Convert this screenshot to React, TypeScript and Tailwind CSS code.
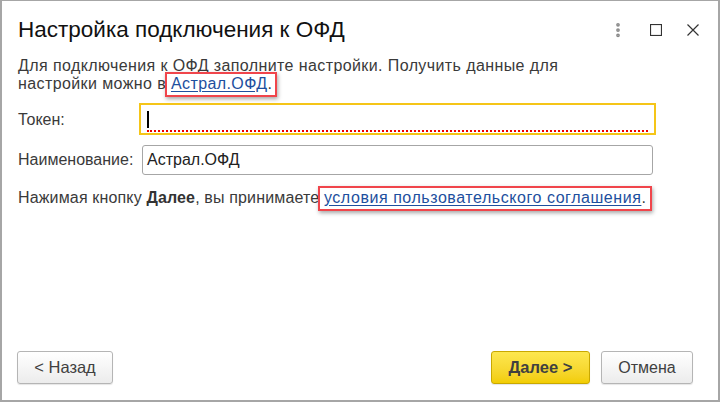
import { EllipsisVertical } from "lucide-react";

export default function App() {
  return (
    <div
      className="w-[720px] h-[402px] bg-white border-l-2 border-r-2 border-b-2 border-t border-[#a6a6a6] flex flex-col text-[#3a3a3a]"
      style={{ fontFamily: '"Liberation Sans", Arial, sans-serif' }}
    >
      {/* Header */}
      <div className="flex items-center pl-[16px] pr-[19px] pt-[13px] h-[44px]">
        <h1 className="flex-1 text-[22.5px] leading-[28px] text-[#111]">Настройка подключения к ОФД</h1>
        <div className="flex items-center">
          <EllipsisVertical className="h-[18px] w-[18px] text-[#8a8a8a]" strokeWidth={3} />
          <svg className="ml-[23px] h-[12px] w-[12px]" viewBox="0 0 12 12">
            <rect x="0.5" y="0.5" width="11" height="11" fill="none" stroke="#333" strokeWidth="1.2" />
          </svg>
          <svg className="ml-[25px] h-[12px] w-[12px]" viewBox="0 0 12 12">
            <path d="M0.5 0.5 L11.5 11.5 M11.5 0.5 L0.5 11.5" stroke="#333" strokeWidth="1.2" />
          </svg>
        </div>
      </div>

      {/* Body */}
      <div className="flex-1 flex flex-col pl-[16px] pr-[62px] pt-[12px] text-[16px] leading-[18px]">
        <p className="pr-[60px] tracking-[0.4px]">
          Для подключения к ОФД заполните настройки. Получить данные для настройки можно в{" "}
          <span className="relative">
            <a className="text-[#1d4f9e] underline underline-offset-2">Астрал.ОФД</a>.
            <span className="absolute -left-[6px] -right-[5px] -top-[3px] -bottom-[5px] border-2 border-[#f0454b] shadow-[1px_2px_4px_rgba(0,0,0,0.35)]" />
          </span>
        </p>

        <div className="flex items-center mt-[10px]">
          <label className="w-[121px] pt-[2px]">Токен:</label>
          <div className="flex-1 h-[32px] border-2 border-[#f5c518] px-[6px] flex flex-col justify-center">
            <div className="relative h-[20px]">
              <span className="absolute left-0 top-[2px] h-[17px] w-[2px] bg-black" />
              <span className="absolute left-0 right-0 bottom-[-3px] border-b-2 border-dotted border-[#e00]" />
            </div>
          </div>
        </div>

        <div className="flex items-center mt-[10px] pr-[3px]">
          <label className="w-[124px]">Наименование:</label>
          <div className="flex-1 h-[30px] border border-[#a6a6a6] rounded-[3px] px-[4px] flex items-center text-[#222] text-[16px]">
            Астрал.ОФД
          </div>
        </div>

        <p className="mt-[14px] tracking-[0.15px]">
          Нажимая кнопку <b className="text-[#333]">Далее</b>, вы принимаете{" "}
          <span className="relative">
            <a className="text-[#1d4f9e] underline underline-offset-2 tracking-[0.55px]">условия пользовательского соглашения</a>.
            <span className="absolute -left-[6px] -right-[6px] -top-[3px] -bottom-[5px] border-2 border-[#f0454b] shadow-[1px_2px_4px_rgba(0,0,0,0.35)]" />
          </span>
        </p>
      </div>

      {/* Footer */}
      <div className="flex items-center pl-[15px] pr-[25px] pb-[16px]">
        <button className="h-[33px] w-[96px] rounded-[3px] border border-[#b5b5b5] bg-gradient-to-b from-white to-[#ececec] text-[16.5px] text-[#404040] shadow-[0_1px_1px_rgba(0,0,0,0.1)]">
          &lt; Назад
        </button>
        <div className="flex-1" />
        <button className="h-[33px] w-[99px] rounded-[3px] border border-[#c9a800] bg-gradient-to-b from-[#fde74e] to-[#f2cd00] text-[16.5px] font-bold text-[#404040] shadow-[0_1px_1px_rgba(0,0,0,0.1)]">
          Далее &gt;
        </button>
        <button className="ml-[11px] h-[33px] w-[92px] rounded-[3px] border border-[#b5b5b5] bg-gradient-to-b from-white to-[#ececec] text-[16px] text-[#404040] shadow-[0_1px_1px_rgba(0,0,0,0.1)]">
          Отмена
        </button>
      </div>
    </div>
  );
}
